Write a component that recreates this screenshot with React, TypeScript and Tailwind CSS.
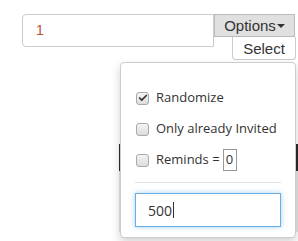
import { Check } from 'lucide-react';

function Box({ checked }: { checked?: boolean }) {
  return (
    <span className="w-[13px] h-[13px] rounded-[3px] border border-[#a9a9a9] bg-gradient-to-b from-[#f4f4f4] to-[#dcdcdc] flex items-center justify-center shrink-0">
      {checked && <Check className="w-[10px] h-[10px] text-[#333]" strokeWidth={4} />}
    </span>
  );
}

export default function App() {
  return (
    <div className="relative w-[298px] h-[241px] bg-white overflow-hidden" style={{ fontFamily: '"Liberation Sans", Arial, sans-serif' }}>
      <div className="flex pt-[14px] pl-[22px]">
        <div className="w-[192px] h-[33px] border border-[#ccc] rounded-l-[4px] flex items-center pl-[13px] text-[14px] text-[#b8502e]">
          1
        </div>
        <div className="flex flex-col items-end">
          <button className="w-[81px] h-[23px] bg-[#e0e0e0] border border-[#bbb] text-[15px] text-[#333] flex items-center justify-center leading-none">
            Options
            <span className="ml-[1px] w-0 h-0 border-l-[4px] border-r-[4px] border-t-[4px] border-l-transparent border-r-transparent border-t-[#333]" />
          </button>
          <button className="w-[64px] h-[23px] -mr-[1px] bg-white border border-t-0 border-[#ccc] rounded-b-[4px] text-[15px] text-[#333] flex items-center justify-center leading-none">
            Select
          </button>
        </div>
      </div>

      {/* content under the menu */}
      <div className="mt-[84px] ml-[119px] h-[27px] bg-[#2b2b2b]" />
      <div className="ml-[119px] h-[61px] bg-[#e4e4e4]" />

      <div
        className="absolute left-[120px] top-[62px] w-[176px] h-[176px] bg-white border border-[#ccc] rounded-[4px] shadow-[0_4px_10px_rgba(0,0,0,0.18)] pt-[27px] px-[14px] text-[13px] text-[#333]"
        style={{ fontFamily: '"Open Sans", sans-serif' }}
      >
        <div className="flex items-center gap-[7px] h-[16px] pl-[1px]">
          <Box checked />
          <span>Randomize</span>
        </div>
        <div className="flex items-center gap-[7px] h-[16px] pl-[1px] mt-[15px]">
          <Box />
          <span>Only already Invited</span>
        </div>
        <div className="flex items-center gap-[7px] h-[24px] pl-[1px] mt-[11px]">
          <Box />
          <span>Reminds =</span>
          <span className="-ml-[4px] w-[14px] h-[22px] border border-[#999] flex items-center justify-center">0</span>
        </div>
        <div className="h-px bg-[#e2e2e2] mt-[10px]" />
        <div className="mt-[10px] h-[34px] border border-[#66afe9] shadow-[0_0_5px_rgba(102,175,233,0.6)] flex items-center pl-[12px] text-[14px]">
          500<span className="w-px h-[16px] bg-[#333] ml-[1px]" />
        </div>
      </div>
    </div>
  );
}
